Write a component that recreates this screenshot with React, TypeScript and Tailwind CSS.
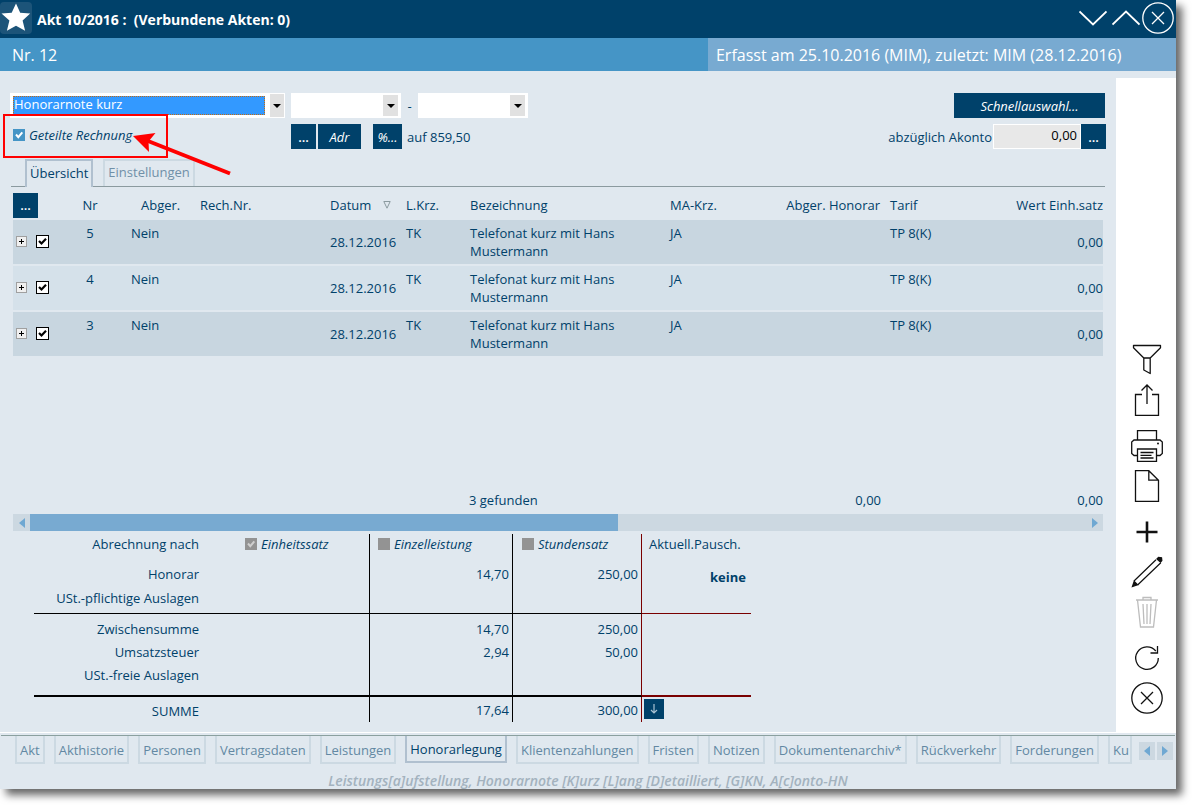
import type { ReactNode } from "react";
import clsx from "clsx";

interface Entry {
  nr: number;
  settled: string;
  date: string;
  code: string;
  text: string;
  staff: string;
  tariff: string;
  value: string;
}

const entries: Entry[] = [5, 4, 3].map((nr) => ({
  nr,
  settled: "Nein",
  date: "28.12.2016",
  code: "TK",
  text: "Telefonat kurz mit Hans Mustermann",
  staff: "JA",
  tariff: "TP 8(K)",
  value: "0,00",
}));

const fileTabs = [
  "Akt",
  "Akthistorie",
  "Personen",
  "Vertragsdaten",
  "Leistungen",
  "Honorarlegung",
  "Klientenzahlungen",
  "Fristen",
  "Notizen",
  "Dokumentenarchiv*",
  "Rückverkehr",
  "Forderungen",
];

function DropArrow({ className }: { className?: string }) {
  return (
    <span
      className={clsx(
        "pointer-events-none flex items-center justify-center bg-[#e1e1e1]",
        className
      )}
    >
      <svg width="8" height="4" viewBox="0 0 8 4">
        <path d="M0 0h8L4 4z" fill="#000" />
      </svg>
    </span>
  );
}

function Combo({ label }: { label: string }) {
  return (
    <div className="flex h-[25px] w-[110px] items-center bg-white pr-[3px]">
      <select
        aria-label={label}
        className="h-full min-w-0 flex-1 appearance-none bg-white"
      >
        <option></option>
      </select>
      <DropArrow className="h-[21px] w-[15px]" />
    </div>
  );
}

interface DarkButtonProps {
  children: ReactNode;
  className?: string;
  label?: string;
}

function DarkButton({ children, className, label }: DarkButtonProps) {
  return (
    <button
      aria-label={label}
      className={clsx(
        "flex h-[25px] shrink-0 items-center justify-center bg-[#00416a] text-white",
        className
      )}
    >
      {children}
    </button>
  );
}

interface TickProps {
  label: string;
  checked?: boolean;
  disabled?: boolean;
  className?: string;
}

function Tick({ label, checked, disabled, className }: TickProps) {
  return (
    <label className={clsx("flex items-center gap-1 italic", className)}>
      <span className="grid size-3 shrink-0">
        <input
          type="checkbox"
          defaultChecked={checked}
          disabled={disabled}
          className="col-start-1 row-start-1 size-3 appearance-none bg-[#4595c6] disabled:bg-[#939393]"
        />
        {checked && (
          <svg
            viewBox="0 0 12 12"
            className={clsx(
              "pointer-events-none col-start-1 row-start-1 size-3",
              disabled ? "text-[#cfcfcf]" : "text-white"
            )}
          >
            <path
              d="M3 5.5l2.3 2.7L9.3 3.4"
              fill="none"
              stroke="currentColor"
              strokeWidth="2"
            />
          </svg>
        )}
      </span>
      <span className="whitespace-nowrap">{label}</span>
    </label>
  );
}

function SideButton({ label, children }: { label: string; children: ReactNode }) {
  return (
    <button aria-label={label} className="size-8">
      <svg
        viewBox="0 0 32 32"
        className="size-8"
        fill="none"
        stroke="#111"
        strokeWidth="1.3"
      >
        {children}
      </svg>
    </button>
  );
}

function TitleBar() {
  return (
    <header className="flex h-[38px] items-center bg-[#00416a] pr-[2px] pb-[2px] text-white">
      <span className="flex size-8 items-center justify-center rounded bg-[#1c5479]">
        <svg width="32" height="32" viewBox="0 0 32 32">
          <path
            d="M16 1.5l4.2 9.2 10 .9-7.6 6.9 2.5 10.3L16 23.8l-9.1 5L9.4 18.5 1.5 11.6l10.2-.9z"
            fill="#fff"
          />
        </svg>
      </span>
      <h1 className="flex-1 pt-1 pl-[5px] text-sm leading-[18px] font-bold whitespace-pre">
        {"Akt 10/2016 :  (Verbundene Akten: 0)"}
      </h1>
      <div className="flex items-center gap-[5px]">
        <button aria-label="Nächster">
          <svg width="28" height="16" viewBox="0 0 28 16" fill="none" stroke="#fff" strokeWidth="1.8">
            <path d="M.5 1.5L14 14.5 27.5 1.5" />
          </svg>
        </button>
        <button aria-label="Vorheriger">
          <svg width="28" height="16" viewBox="0 0 28 16" fill="none" stroke="#fff" strokeWidth="1.8">
            <path d="M.5 14.5L14 1.5l13.5 13" />
          </svg>
        </button>
        <button aria-label="Schließen" className="-ml-[3px]">
          <svg width="32" height="32" viewBox="0 0 32 32" fill="none" stroke="#fff" strokeWidth="1.3">
            <circle cx="16" cy="16" r="15.2" />
            <path d="M10 10l12 12M22 10L10 22" />
          </svg>
        </button>
      </div>
    </header>
  );
}

function Filters() {
  return (
    <div className="pr-[10px] pl-[10px]">
      <div className="flex items-center">
        <div className="flex h-[25px] w-[275px] items-center justify-between bg-white pr-px pl-[3px]">
          <select
            aria-label="Art der Honorarnote"
            className="h-[19px] w-[252px] appearance-none border border-dotted border-[#c26a10] bg-[#3399ff] pb-[3px] leading-[14px] text-white"
          >
            <option>Honorarnote kurz</option>
          </select>
          <DropArrow className="h-[23px] w-[14px]" />
        </div>
        <div className="flex items-center pl-[6px]">
          <Combo label="Von" />
          <span className="w-[17px] text-center">-</span>
          <Combo label="Bis" />
        </div>
        <DarkButton className="mr-px ml-auto w-[151px] italic">
          Schnellauswahl...
        </DarkButton>
      </div>

      <div className="mt-[6px] flex items-center">
        <div className="w-[281px] pb-[3px] pl-[3px]">
          <Tick label="Geteilte Rechnung" checked />
        </div>
        <DarkButton className="w-[25px] font-semibold" label="Adresse wählen">
          ...
        </DarkButton>
        <DarkButton className="ml-[2px] w-[43px] italic">Adr</DarkButton>
        <DarkButton className="mr-[5px] ml-3 w-[29px] italic">%...</DarkButton>
        <span>auf 859,50</span>
        <label htmlFor="akonto" className="ml-auto">
          abzüglich Akonto
        </label>
        <input
          id="akonto"
          defaultValue="0,00"
          className="ml-px h-[25px] w-[88px] border border-white bg-[#e8e8e8] pr-[3px] pb-[3px] text-right text-black"
        />
        <DarkButton className="w-[25px] font-semibold" label="Akonto wählen">
          ...
        </DarkButton>
      </div>
    </div>
  );
}

function ViewTabs() {
  return (
    <div className="mt-[10px] flex h-7 items-stretch pr-[11px] pl-[11px]">
      <span className="w-[14px] border-b border-[#8b9a9f]" />
      <button className="border-2 border-b-0 border-[#b0c0cf] px-[3px] pb-[3px]">
        Übersicht
      </button>
      <span className="w-[10px] border-b border-[#8b9a9f]" />
      <div className="flex border-b border-[#8b9a9f]">
        <button className="border-2 border-b-0 border-[#ccd9e2] px-[3px] pb-[3px] text-[#7090a8]">
          Einstellungen
        </button>
      </div>
      <span className="flex-1 border-b border-[#8b9a9f]" />
    </div>
  );
}

function EntryTable() {
  return (
    <table className="w-full table-fixed border-separate border-spacing-x-0 border-spacing-y-[2px] text-left leading-[18px]">
      <colgroup>
        <col className="w-[62px]" />
        <col className="w-[30px]" />
        <col className="w-[85px]" />
        <col className="w-[130px]" />
        <col className="w-[76px]" />
        <col className="w-[64px]" />
        <col className="w-[200px]" />
        <col className="w-[110px]" />
        <col className="w-[110px]" />
        <col className="w-[100px]" />
        <col />
      </colgroup>
      <thead>
        <tr className="h-[26px] whitespace-nowrap [&>th]:p-0 [&>th]:font-normal">
          <th>
            <DarkButton className="w-[25px] font-semibold" label="Spalten">
              ...
            </DarkButton>
          </th>
          <th>
            <span className="flex justify-center">Nr</span>
          </th>
          <th>
            <span className="pl-9">Abger.</span>
          </th>
          <th>
            <span className="pl-[10px]">Rech.Nr.</span>
          </th>
          <th>
            <span className="flex items-center justify-between pr-[5px] pl-[10px]">
              Datum
              <svg width="8" height="8" viewBox="0 0 8 8">
                <path d="M.8.5h6.4L4 7.2z" fill="none" stroke="#8b9a9f" />
              </svg>
            </span>
          </th>
          <th>
            <span className="pl-[10px]">L.Krz.</span>
          </th>
          <th>
            <span className="pl-[10px]">Bezeichnung</span>
          </th>
          <th>
            <span className="pl-[10px]">MA-Krz.</span>
          </th>
          <th>
            <span className="flex justify-end">Abger. Honorar</span>
          </th>
          <th>
            <span className="pl-[10px]">Tarif</span>
          </th>
          <th>
            <span className="flex justify-end">Wert Einh.satz</span>
          </th>
        </tr>
      </thead>
      <tbody>
        {entries.map((entry) => (
          <tr
            key={entry.nr}
            className="h-[44px] bg-[#d5e1ea] odd:bg-[#c8d6e0] [&>td]:py-1 [&>td]:align-top"
          >
            <td>
              <span className="flex h-[34px] items-center gap-[9px] pl-[3px]">
                <button
                  aria-label="Aufklappen"
                  className="flex size-[11px] items-center justify-center border border-[#a0a0a0] bg-[#f0f0f0]"
                >
                  <svg width="5" height="5" viewBox="0 0 5 5">
                    <path d="M2 0h1v2h2v1H3v2H2V3H0V2h2z" fill="#000" />
                  </svg>
                </button>
                <span className="grid size-[13px]">
                  <input
                    type="checkbox"
                    defaultChecked
                    aria-label={`Leistung ${entry.nr}`}
                    className="col-start-1 row-start-1 size-[13px] appearance-none border border-black bg-white"
                  />
                  <svg
                    viewBox="0 0 13 13"
                    className="pointer-events-none col-start-1 row-start-1 size-[13px]"
                  >
                    <path d="M3 6l2.5 2.5L10 3.800" fill="none" stroke="#000" strokeWidth="2.2" />
                  </svg>
                </span>
              </span>
            </td>
            <td className="text-center">{entry.nr}</td>
            <td className="pl-[26px]">{entry.settled}</td>
            <td></td>
            <td className="pl-[10px] leading-9">{entry.date}</td>
            <td className="pl-[10px]">{entry.code}</td>
            <td className="pr-[40px] pl-[10px]">{entry.text}</td>
            <td className="pl-[10px]">{entry.staff}</td>
            <td></td>
            <td className="pl-[10px]">{entry.tariff}</td>
            <td className="text-right leading-9">{entry.value}</td>
          </tr>
        ))}
      </tbody>
    </table>
  );
}

function ScrollArrow({ left, className }: { left?: boolean; className?: string }) {
  return (
    <button
      aria-label={left ? "Nach links" : "Nach rechts"}
      className={clsx("flex items-center justify-center bg-[#ccd8e1]", className)}
    >
      <svg width="6" height="10" viewBox="0 0 6 10" fill="#6fa8d2">
        <path d={left ? "M6 0v10L0 5z" : "M0 0v10l6-5z"} />
      </svg>
    </button>
  );
}

function Totals() {
  return (
    <table className="mt-[3px] ml-[21px] w-[717px] table-fixed border-separate border-spacing-0 text-right [&_td]:p-0 [&_th]:p-0 [&_th]:font-normal">
      <colgroup>
        <col className="w-[165px]" />
        <col className="w-[171px]" />
        <col className="w-[143px]" />
        <col className="w-[129px]" />
        <col />
      </colgroup>
      <tbody className="[&_td]:border-black [&_tr>*]:align-top [&_tr>td:nth-child(2)]:border-r [&_tr>td:nth-child(3)]:border-r [&_tr>td:nth-child(3)]:pr-[3px] [&_tr>td:nth-child(4)]:border-r [&_tr>td:nth-child(4)]:border-r-[#7a0000] [&_tr>td:nth-child(4)]:pr-[3px]">
        <tr className="h-[28px] leading-[20px]">
          <th className="text-right">Abrechnung nach</th>
          <td>
            <Tick label="Einheitssatz" checked disabled className="pl-[46px]" />
          </td>
          <td>
            <Tick label="Einzelleistung" disabled className="pl-[8px]" />
          </td>
          <td>
            <Tick label="Stundensatz" disabled className="pl-[9px]" />
          </td>
          <td>
            <span className="block pl-[7px] text-left">Aktuell.Pausch.</span>
          </td>
        </tr>
        <tr className="h-[24px] leading-[24px]">
          <th className="text-right">Honorar</th>
          <td></td>
          <td>14,70</td>
          <td>250,00</td>
          <td rowSpan={2} className="border-b border-b-[#7a0000]!">
            <strong className="block pt-[3px] pr-[5px]">keine</strong>
          </td>
        </tr>
        <tr className="h-[28px] leading-[24px] [&>*]:border-b">
          <th className="border-black text-right">USt.-pflichtige Auslagen</th>
          <td></td>
          <td></td>
          <td></td>
        </tr>
        <tr className="h-[27px] leading-[23px]">
          <th className="text-right">
            <span className="block pt-1">Zwischensumme</span>
          </th>
          <td></td>
          <td>
            <span className="block pt-1">14,70</span>
          </td>
          <td>
            <span className="block pt-1">250,00</span>
          </td>
          <td></td>
        </tr>
        <tr className="h-[23px] leading-[23px]">
          <th className="text-right">Umsatzsteuer</th>
          <td></td>
          <td>2,94</td>
          <td>50,00</td>
          <td></td>
        </tr>
        <tr className="h-[33px] leading-[23px] [&>*]:border-b-2">
          <th className="border-black text-right">USt.-freie Auslagen</th>
          <td></td>
          <td></td>
          <td></td>
          <td className="border-b-[#7a0000]!"></td>
        </tr>
        <tr className="h-[25px]">
          <th className="text-right">
            <span className="block pt-1 leading-[21px]">SUMME</span>
          </th>
          <td>
          </td>
          <td>
            <span className="block pt-1">17,64</span>
          </td>
          <td>
            <span className="block pt-1">300,00</span>
          </td>
          <td>
            <button
              aria-label="Übernehmen"
              className="mt-[2px] ml-[2px] flex size-5 items-center justify-center bg-[#00416a]"
            >
              <svg width="8" height="10" viewBox="0 0 8 10" fill="none" stroke="#a9c2d3" strokeWidth="1.2">
                <path d="M4 0v9M1 6l3 3 3-3" />
              </svg>
            </button>
          </td>
        </tr>
      </tbody>
    </table>
  );
}

function Sidebar() {
  return (
    <aside className="mt-[7px] flex w-[60px] shrink-0 flex-col items-center justify-end gap-[14px] bg-white pr-px pb-[18px] pl-[3px]">
      <div className="flex flex-col gap-2">
        <SideButton label="Filter">
          <path d="M2.5 1.5h27v2.3L19.2 14v15.5L12.8 26V14L2.5 3.8z M12.8 14h6.4" strokeLinejoin="round" />
        </SideButton>
        <SideButton label="Exportieren">
          <path d="M11 10.500H4.500v21h23v-21H21" />
          <path d="M16 20V1M10.500 6.500L16 1l5.500 5.500" />
        </SideButton>
      </div>
      <div className="flex flex-col gap-2">
        <SideButton label="Drucken">
          <path d="M6.500 10V.7h19V10M6.500 25.500H3L.7 23.500V12L3 10h26l2.300 2v11.500l-2.300 2h-3.500" />
          <path d="M6.500 19h19v12.300h-19zM9.500 22.500h13M9.500 25.300h11M9.500 28h13" />
          <circle cx="27" cy="13.5" r="1" fill="#111" stroke="none" />
        </SideButton>
        <SideButton label="Neues Dokument">
          <path d="M4.500.7h13.300l9.700 9.500v21.100h-23zM17.800.7v9.500h9.700" />
        </SideButton>
      </div>
      <div className="flex flex-col gap-2">
        <SideButton label="Hinzufügen">
          <path d="M16 5.500v21M5.500 16h21" strokeWidth="2.6" />
        </SideButton>
        <SideButton label="Bearbeiten">
          <path d="M3 25L25 3.800M6.600 29L29.800 6.800" strokeWidth="1.200" />
          <path d="M3.200 25.500l3.300 3.300L1.500 30.500z" fill="#111" />
          <path d="M26 3l1.500-1.500 3 .3.300 2.700L29.500 6z" fill="#111" />
        </SideButton>
        <SideButton label="Löschen">
          <g stroke="#bdbdbd">
            <path d="M5 4h22M12 4V1.500h8V4M6.500 4l3 27h13l3-27" />
            <path d="M12 8l1 20M16 8v20M20 8l-1 20" />
          </g>
        </SideButton>
      </div>
      <div className="flex flex-col gap-2">
        <SideButton label="Aktualisieren">
          <path d="M27.300 16A11.300 11.300 0 1 1 24.800 9" />
          <path d="M26.500 4v7h-7" />
        </SideButton>
        <SideButton label="Abbrechen">
          <circle cx="16" cy="16" r="15.2" />
          <path d="M10 10l12 12M22 10L10 22" />
        </SideButton>
      </div>
    </aside>
  );
}

function Footer() {
  return (
    <footer className="h-[57px] border-t border-white pt-[2px]">
      <div className="mx-px flex border-t border-[#8ba09f] pr-[2px] pl-[14px]">
        <nav className="flex min-w-0 flex-1 items-start gap-[9px] overflow-hidden">
          {fileTabs.map((tab) => (
            <button
              key={tab}
              className={clsx(
                "shrink-0 border-2 border-t-0 px-[3px]",
                tab === "Honorarlegung"
                  ? "h-[27px] border-[#b0c0cf]"
                  : "h-7 border-[#ccd9e2] pt-[2px] text-[#6388a3]"
              )}
            >
              {tab}
            </button>
          ))}
          <button className="h-7 w-6 shrink-0 border-2 border-t-0 border-[#ccd9e2] pt-[2px] pl-[3px] text-left text-[#6388a3]">
            Ku
          </button>
        </nav>
        <div className="mt-[6px] ml-[6px] flex gap-[2px]">
          <ScrollArrow left className="h-[18px] w-4" />
          <ScrollArrow className="h-[18px] w-4" />
        </div>
      </div>
      <p className="mt-[9px] text-center text-sm leading-4 font-semibold text-[#a3b2be] italic">
        Leistungs[a]ufstellung, Honorarnote [K]urz [L]ang [D]etailliert, [G]KN,
        A[c]onto-HN
      </p>
    </footer>
  );
}

// red frame and arrow that point out the split invoice option
function Callout() {
  return (
    <div className="pointer-events-none absolute top-[43px] left-[3px]">
      <div className="h-[44px] w-[165px] border-2 border-[#f00]" />
      <svg
        className="absolute top-0 left-0"
        width="240"
        height="70"
        viewBox="0 0 240 70"
      >
        <path d="M227 59.5L145 27" stroke="#f00" strokeWidth="4" />
        <path d="M130 22l22.5-3-7 8.500.5 10.500z" fill="#f00" />
      </svg>
    </div>
  );
}

export default function App() {
  return (
    <div className="flex min-h-screen bg-white pr-4 pb-4 font-['Open_Sans',sans-serif] text-[13px] leading-[18px] text-[#00416a]">
      <div className="flex min-w-0 flex-1 flex-col bg-[#e0e8ef] shadow-[6px_6px_8px_rgba(0,0,0,0.6)]">
        <TitleBar />
        <div className="flex h-[33px] items-center text-[16px] text-white">
          <div className="flex h-full flex-[708] items-center bg-[#4595c6] pl-3">
            Nr. 12
          </div>
          <div className="flex h-full flex-[468] items-center bg-[#78aad1] pl-2 whitespace-nowrap">
            Erfasst am 25.10.2016 (MIM), zuletzt: MIM (28.12.2016)
          </div>
        </div>

        <div className="flex flex-1">
          <main className="relative flex min-w-0 flex-1 flex-col pt-[22px] pb-[10px]">
            <Filters />
            <ViewTabs />
            <div className="mt-[3px] flex flex-1 flex-col pr-[13px] pl-[13px]">
              <EntryTable />
              <div className="mt-auto flex pb-[5px]">
                <span className="w-[656px] pl-[456px]">3 gefunden</span>
                <span className="w-[212px] text-right">0,00</span>
                <span className="flex-1 text-right">0,00</span>
              </div>
              <div className="flex h-[17px] bg-[#ccd8e1]">
                <ScrollArrow left className="w-[17px]" />
                <div className="flex flex-1">
                  <div className="w-[55.7%] bg-[#78aad1]" />
                </div>
                <ScrollArrow className="w-[17px]" />
              </div>
              <Totals />
            </div>
            <Callout />
          </main>
          <Sidebar />
        </div>

        <Footer />
      </div>
    </div>
  );
}
